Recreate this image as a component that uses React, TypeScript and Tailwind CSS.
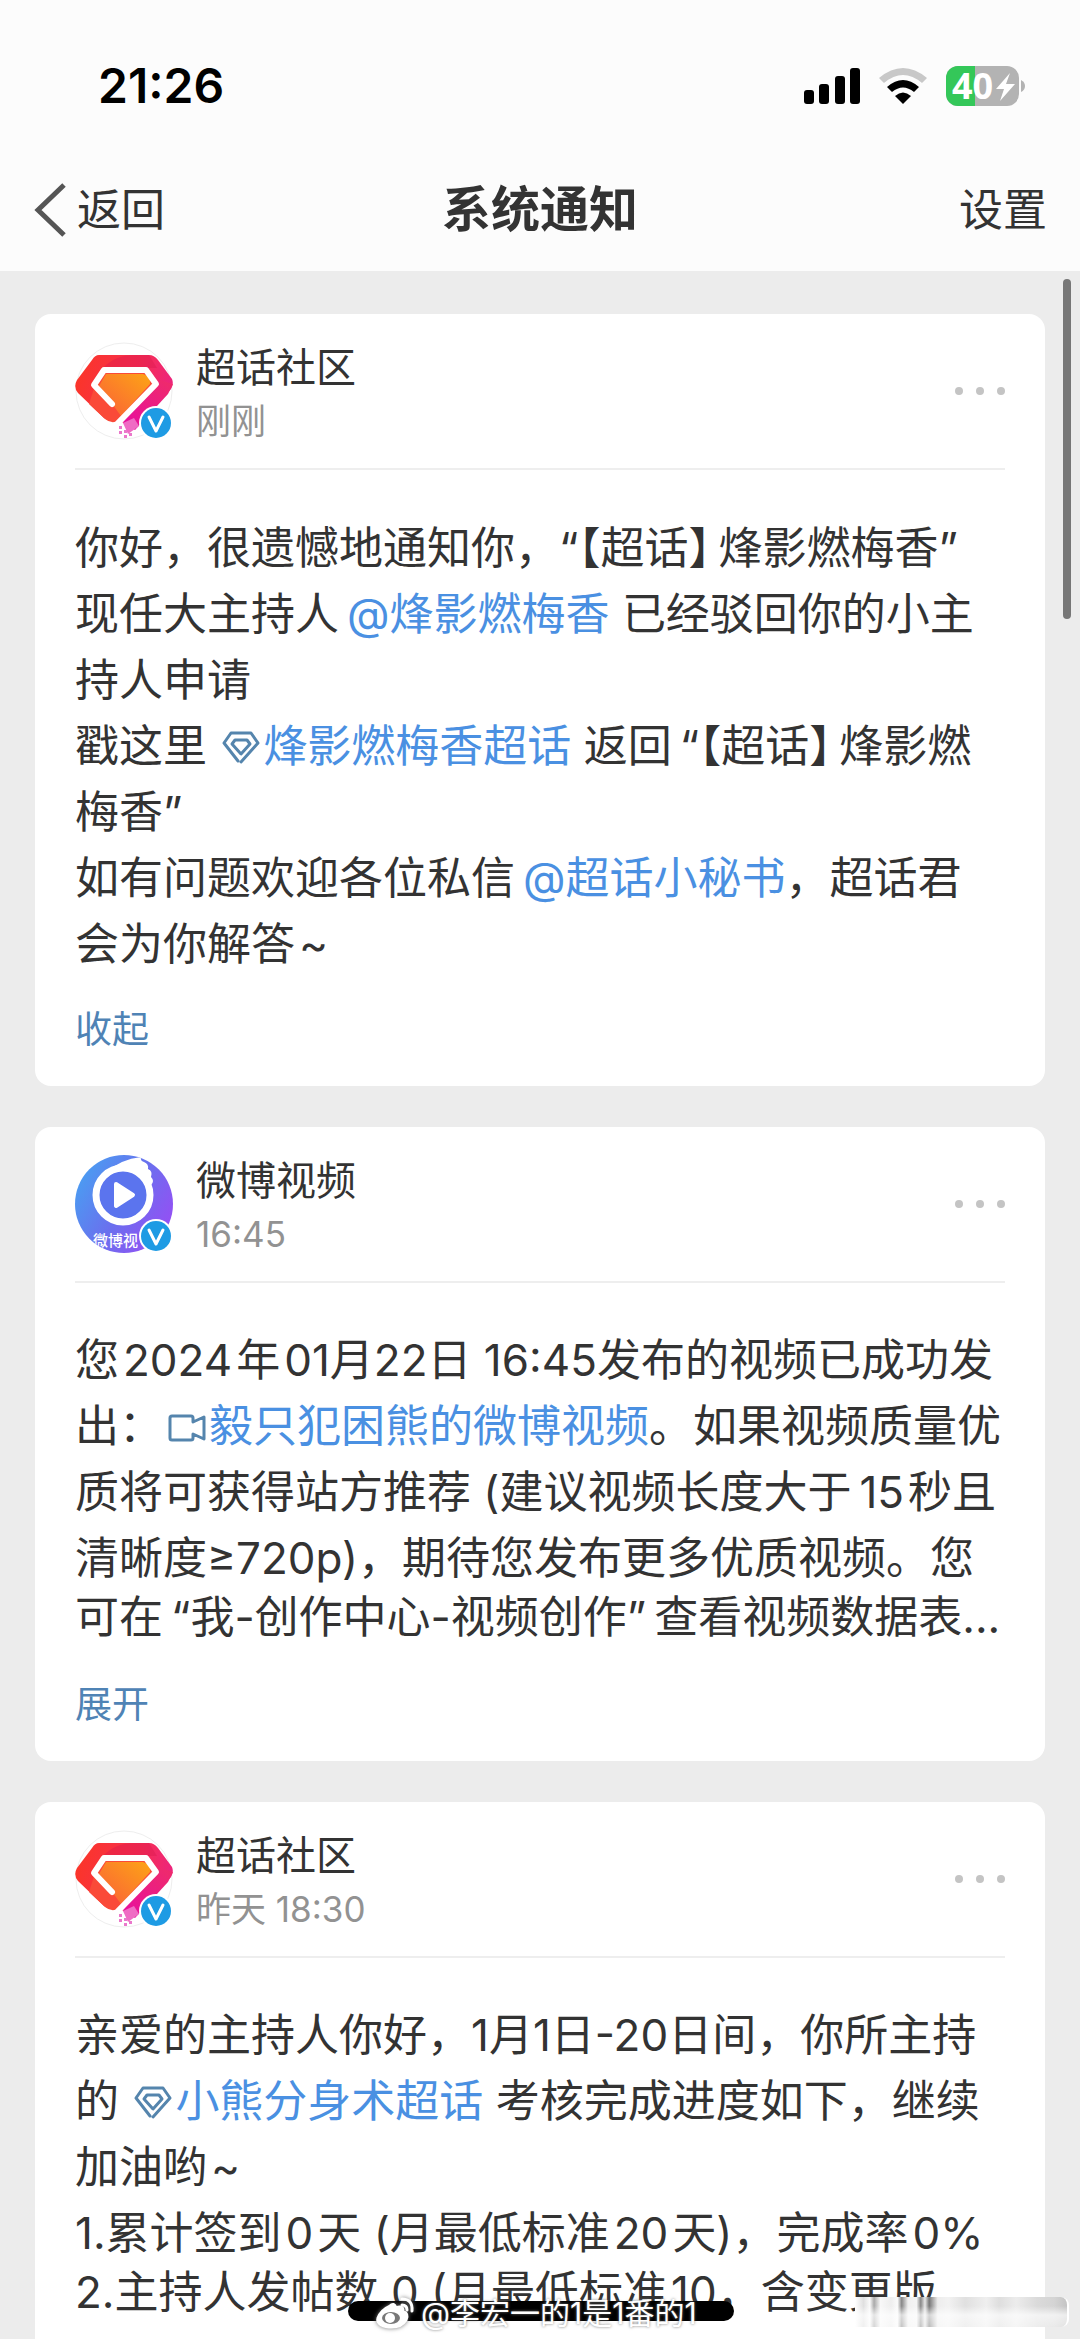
import type { ReactNode } from 'react';

type Notice = {
    id: number;
    name: string;
    time: string;
    avatar: 'topic' | 'video';
    lines: ReactNode[];
    clamped: boolean;
    action?: string;
};

// thin and hair spaces between Chinese and latin text
const T = '\u2009';
const H = '\u200a';

function GemIcon() {
    return (
        <svg viewBox="0 0 40 34" className="inline-block w-10 h-[34px] mx-0.5 align-[-2px]" fill="none" stroke="#5585ad" strokeWidth="3" strokeLinejoin="round" strokeLinecap="round">
            <path d="M17 31 L3 13 L10 3 H30 L37 13 L20 32" />
            <path d="M20 24 L11 14 L14 10 H26 L29 14 L20 24 Z" />
        </svg>
    );
}

function CameraIcon() {
    return (
        <svg viewBox="0 0 40 34" className="inline-block w-10 h-[34px] ml-1 mr-0.5 align-[-3px]" fill="none" stroke="#5585ad" strokeWidth="3" strokeLinejoin="round">
            <path d="M26 11 V7 Q26 5 24 5 H5 Q3 5 3 7 V27 Q3 29 5 29 H24 Q26 29 26 27 V23 L37 28 V6 Z" />
        </svg>
    );
}

function Mention({ children }: { children: ReactNode }) {
    return <a href="#" className="text-[#4a90e2]">{children}</a>;
}

function TopicTag() {
    return <><span className="[font-feature-settings:'halt']">【超话】</span>{T}</>;
}

const notices: Notice[] = [
    {
        id: 1,
        name: '超话社区',
        time: '刚刚',
        avatar: 'topic',
        lines: [
            <>你好，很遗憾地通知你，“<TopicTag />烽影燃梅香”</>,
            <>现任大主持人{T}<Mention>@烽影燃梅香</Mention> 已经驳回你的小主</>,
            <>持人申请</>,
            <>戳这里 <Mention><GemIcon />烽影燃梅香超话</Mention> 返回{T}“<TopicTag />烽影燃</>,
            <>梅香”</>,
            <>如有问题欢迎各位私信{T}<Mention>@超话小秘书</Mention>，超话君</>,
            <>会为你解答{H}~</>,
        ],
        clamped: false,
        action: '收起',
    },
    {
        id: 2,
        name: '微博视频',
        time: '16:45',
        avatar: 'video',
        lines: [
            <>您{H}2024{H}年{H}01月22日 16:45发布的视频已成功发</>,
            <>出：<Mention><CameraIcon />毅只犯困熊的微博视频</Mention>。如果视频质量优</>,
            <>质将可获得站方推荐 (建议视频长度大于{T}15{H}秒且</>,
            <>清晰度≥720p)，期待您发布更多优质视频。您</>,
            <>可在{T}“我-创作中心-视频创作”{T}查看视频数据表...</>,
        ],
        clamped: true,
        action: '展开',
    },
    {
        id: 3,
        name: '超话社区',
        time: '昨天 18:30',
        avatar: 'topic',
        lines: [
            <>亲爱的主持人你好，1月1日-20日间，你所主持</>,
            <>的 <Mention><GemIcon />小熊分身术超话</Mention> 考核完成进度如下，继续</>,
            <>加油哟{H}~</>,
            <>1.累计签到{H}0{H}天 (月最低标准{H}20{H}天)，完成率{H}0%</>,
            <>2.主持人发帖数 0 (月最低标准{H}10，含变更版</>,
        ],
        clamped: true,
    },
];

function StatusBar() {
    return (
        <div className="flex items-center justify-between h-[172px] pl-[98px] pr-[54px]">
            <div className="text-[48px] font-semibold text-black">21:26</div>
            <div className="flex items-center gap-[19px]">
                <svg viewBox="0 0 56 36" className="w-14 h-9" fill="#000">
                    <rect x="0" y="22" width="10" height="14" rx="3" />
                    <rect x="15" y="16" width="10" height="20" rx="3" />
                    <rect x="31" y="8" width="10" height="28" rx="3" />
                    <rect x="46" y="0" width="10" height="36" rx="3" />
                </svg>
                <svg viewBox="0 0 48 36" className="w-12 h-9">
                    <path d="M0 10 Q24 -10 48 10 L43 15 Q24 -1 5 15 Z" fill="#c8c8c8" />
                    <path d="M8 19 Q24 5 40 19 L35 24 Q24 15 13 24 Z" fill="#000" />
                    <path d="M16 28 Q24 21 32 28 L24 36 Z" fill="#000" />
                </svg>
                <svg viewBox="0 0 80 40" className="w-20 h-10 overflow-visible">
                    <defs>
                        <clipPath id="battery"><rect width="73" height="40" rx="12" /></clipPath>
                    </defs>
                    <g clipPath="url(#battery)">
                        <rect width="73" height="40" fill="#b3b3b3" />
                        <rect width="29" height="40" fill="#34c759" />
                    </g>
                    <path d="M75 14 Q79 16 79 20 Q79 24 75 26 Z" fill="#b3b3b3" />
                    <text x="6" y="33" fontSize="36" fill="#fff" className="font-bold font-['Open_Sans',sans-serif]">40</text>
                    <path d="M64 7 L50 23 H58 L54 35 L69 18 H60 Z" fill="#fff" />
                </svg>
            </div>
        </div>
    );
}

function NavBar() {
    return (
        <div className="grid grid-cols-3 items-center h-[99px] pb-6 px-[33px] text-[44px] text-[#333]">
            <button className="flex items-center gap-2.5 justify-self-start">
                <svg viewBox="0 0 34 54" className="w-[34px] h-[54px]" fill="none" stroke="#555" strokeWidth="5">
                    <path d="M31 2 L5 27 L31 52" />
                </svg>
                返回
            </button>
            <h1 className="justify-self-center text-[49px] font-bold whitespace-nowrap">系统通知</h1>
            <button className="justify-self-end">设置</button>
        </div>
    );
}

function TopicLogo() {
    return (
        <svg viewBox="0 0 98 98" className="w-full h-full">
            <defs>
                <linearGradient id="gem" x1="0" y1="0.3" x2="1" y2="0.5">
                    <stop offset="0" stopColor="#fb3528" />
                    <stop offset="0.6" stopColor="#f62f52" />
                    <stop offset="1" stopColor="#ec2380" />
                </linearGradient>
                <linearGradient id="tail" x1="1" y1="0" x2="0.3" y2="1">
                    <stop offset="0" stopColor="#ef2c68" />
                    <stop offset="1" stopColor="#e8119c" />
                </linearGradient>
                <linearGradient id="core" x1="0" y1="1" x2="1" y2="0">
                    <stop offset="0" stopColor="#fa5f38" />
                    <stop offset="1" stopColor="#fda416" />
                </linearGradient>
            </defs>
            <circle cx="49" cy="49" r="48" fill="#fff" stroke="#eee" />
            <path d="M24 13 H74 Q79 13 83 18 L97 37 Q99 42 96 47 L62 85 L46 80 L38 79 Q33 79 29 76 L3 51 Q-2 45 2 38 L17 18 Q20 13 24 13 Z" fill="url(#gem)" />
            <path d="M98 42 L93 52 L60 88 L46 79 L84 38 Z" fill="url(#tail)" />
            <path d="M28 26 Q40 13 60 13 H74 L82 26 Z" fill="#d6144e" opacity="0.35" />
            <path d="M20 43 L29 31 H71 L80 42 L43 79 Q36 82 30 77 L14 62 Z" fill="#fa4a38" />
            <path d="M31 32 H68 Q76 34 75 42 L46 74 L24 44 Z" fill="url(#core)" />
            <path d="M37 62 L19 43 L29 28 H71 L81 42 L43 81" fill="none" stroke="#fff" strokeWidth="6" strokeLinecap="round" strokeLinejoin="round" />
            <path d="M48 81 L59 76 L64 84 L53 92 Z" fill="#ef6cc4" />
            <path d="M44 84h3v3h-3z M44 89h3v3h-3z M49 88h3v3h-3z M49 93h3v3h-3z M54 91h3v3h-3z" fill="#ea78cb" />
        </svg>
    );
}

function VideoLogo() {
    return (
        <svg viewBox="0 0 98 98" className="w-full h-full">
            <defs>
                <linearGradient id="video" x1="0" y1="0.2" x2="1" y2="0.8">
                    <stop offset="0" stopColor="#48a0f2" />
                    <stop offset="0.5" stopColor="#6a70ee" />
                    <stop offset="1" stopColor="#9a4bf5" />
                </linearGradient>
                <clipPath id="videoClip"><circle cx="49" cy="49" r="49" /></clipPath>
            </defs>
            <g clipPath="url(#videoClip)">
                <rect width="98" height="98" fill="url(#video)" />
                <path d="M30 18 Q46 4 66 2 Q65 6 69 7 Q74 9 73 14 Q78 16 76 22 Q80 26 76 30 L76 40 Z" fill="#fff" />
                <circle cx="48" cy="40" r="27" fill="#5b74ee" stroke="#fff" strokeWidth="7" />
                <path d="M41 29 L58 40 L41 51 Z" fill="#fff" stroke="#fff" strokeWidth="4" strokeLinejoin="round" />
                <text x="18" y="91" fontSize="15" fontWeight="500" fill="#fff" fontFamily="Noto Sans CJK SC, sans-serif">微博视</text>
            </g>
        </svg>
    );
}

function Avatar({ kind }: { kind: Notice['avatar'] }) {
    return (
        <div className="relative w-[98px] h-[98px] shrink-0">
            {kind === 'topic' ? <TopicLogo /> : <VideoLogo />}
            <svg viewBox="0 0 34 34" className="absolute right-0 bottom-0 w-[34px] h-[34px]">
                <circle cx="17" cy="17" r="17" fill="#fff" />
                <circle cx="17" cy="17" r="15" fill="#1e9be4" />
                <path d="M10 11 L17 25 L24 11" fill="none" stroke="#fff" strokeWidth="3" strokeLinecap="round" strokeLinejoin="round" />
            </svg>
        </div>
    );
}

function NoticeCard({ notice }: { notice: Notice }) {
    return (
        <article className="shrink-0 bg-white rounded-2xl px-10 pb-[30px]">
            <header className="flex items-center h-[156px] border-b-2 border-[#eee]">
                <Avatar kind={notice.avatar} />
                <div className="flex-1 ml-[23px] pt-1.5">
                    <h2 className="text-[40px] leading-[54px] text-[#333]">{notice.name}</h2>
                    <div className="text-[35px] leading-[52px] text-[#929292]">{notice.time}</div>
                </div>
                <button aria-label="更多" className="flex gap-[13px]">
                    <span className="w-2 h-2 rounded-full bg-[#c4c4c4]" />
                    <span className="w-2 h-2 rounded-full bg-[#c4c4c4]" />
                    <span className="w-2 h-2 rounded-full bg-[#c4c4c4]" />
                </button>
            </header>
            <div className={notice.clamped ? 'pt-11 pb-9' : 'pt-[45px] pb-[27px]'}>
                {notice.lines.map((line, i) => (
                    <p
                        key={i}
                        className={`text-[44px] text-[#333] whitespace-nowrap ${notice.clamped && i === notice.lines.length - 1 ? 'leading-[52px]' : 'leading-[66px]'}`}
                    >
                        {line}
                    </p>
                ))}
            </div>
            {notice.action && (
                <button className="block text-[37px] leading-[52px] text-[#4f83b5]">{notice.action}</button>
            )}
        </article>
    );
}

function Watermark() {
    return (
        <div className="absolute bottom-2 left-[375px] flex items-center gap-1.5 text-white text-[30px] leading-9 whitespace-nowrap [text-shadow:0_0_3px_#777]">
            <svg viewBox="0 0 40 34" className="w-10 h-[34px] drop-shadow-[0_0_2px_#777]" fill="none" stroke="#fff" strokeWidth="3" strokeLinecap="round">
                <path d="M15 10 Q19 6 21 12 Q28 9 28 15 Q34 18 31 24 Q26 32 14 31 Q1 29 3 22 Q6 14 15 10 Z" fill="#fff" />
                <ellipse cx="16" cy="22" rx="9" ry="6" fill="#777" stroke="none" />
                <circle cx="15" cy="22" r="5" fill="#fff" stroke="none" />
                <path d="M27 3 Q38 3 37 15" />
                <path d="M27 9 Q32 9 32 14" />
            </svg>
            @李宏一的1是1番的1
        </div>
    );
}

export default function App() {
    return (
        <div className="relative flex flex-col h-screen overflow-hidden bg-[#ececec] font-[Inter,'Noto_Sans_CJK_SC',sans-serif]">
            <div className="shrink-0 bg-[#fcfcfc]">
                <StatusBar />
                <NavBar />
            </div>
            <main className="flex flex-col flex-1 gap-[41px] min-h-0 overflow-hidden pt-[43px] px-[35px]">
                {notices.map((notice) => (
                    <NoticeCard key={notice.id} notice={notice} />
                ))}
            </main>
            <div className="absolute right-[9px] top-[279px] w-2 h-[340px] rounded-full bg-[#777]" />
            <div className="absolute bottom-[18px] left-[348px] w-[386px] h-5 rounded-full bg-black" />
            <Watermark />
            <div className="absolute bottom-3 right-[11px] w-[214px] h-[30px] rounded-r-lg border-r-2 border-white bg-[linear-gradient(180deg,#fff0_0%,#fff0_30%,#ffffffb0_60%,#ffffff80_100%),linear-gradient(90deg,#fff_0%,#e0e0e0_4%,#fafafa_7%,#aaa_9%,#f8f8f8_12%,#eee_17%,#fafafa_20%,#888_22%,#f0f0f0_25%,#f4f4f4_29%,#888_31%,#e8e8e8_33%,#777_35%,#ededed_39%,#f2f2f2_44%,#e0e0e0_52%,#efefef_62%,#dedede_68%,#ececec_76%,#dadada_86%,#d4d4d4_94%,#c4c4c4_100%)]" />
        </div>
    );
}
